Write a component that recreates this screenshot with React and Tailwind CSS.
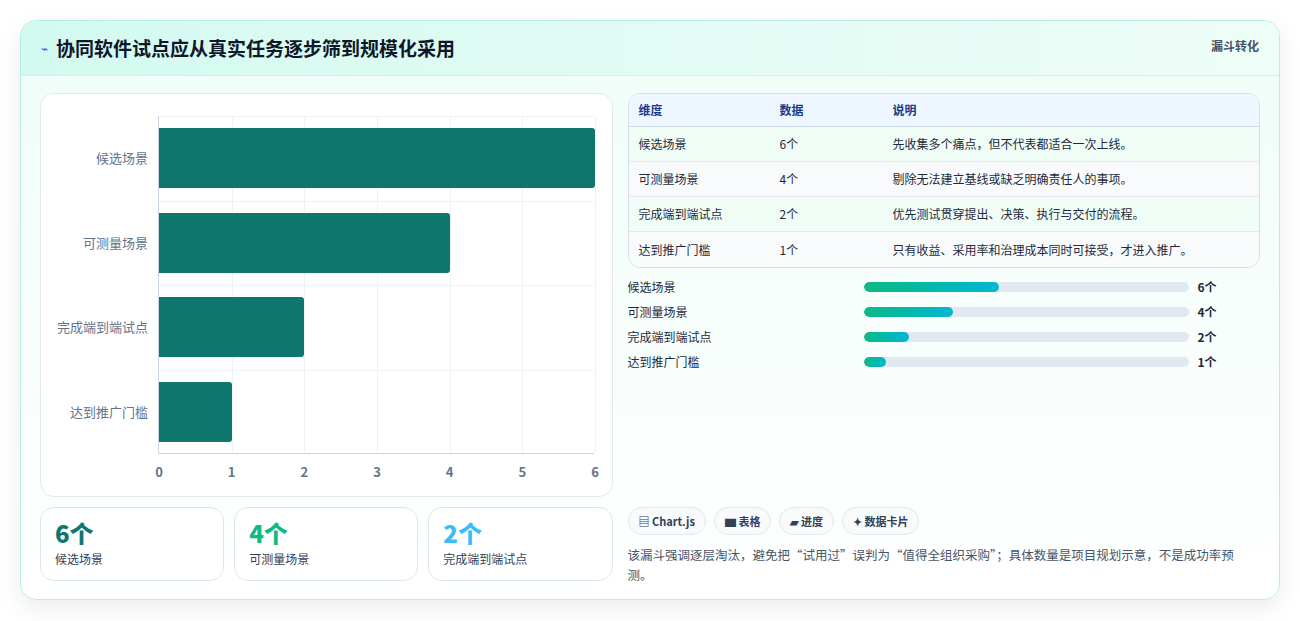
export default function App() {
  const font = { fontFamily: '"Noto Sans CJK SC", "Noto Sans", sans-serif' };
  const rows = [
    ["候选场景", "6个", "先收集多个痛点，但不代表都适合一次上线。", 135],
    ["可测量场景", "4个", "剔除无法建立基线或缺乏明确责任人的事项。", 89],
    ["完成端到端试点", "2个", "优先测试贯穿提出、决策、执行与交付的流程。", 45],
    ["达到推广门槛", "1个", "只有收益、采用率和治理成本同时可接受，才进入推广。", 22],
  ];
  const vals = [6, 4, 2, 1];
  const unit = 436 / 6;
  return (
    <div style={font} className="w-[1300px] h-[621px] bg-white pt-[20px] px-[20px]">
      <div className="w-[1260px] h-[580px] rounded-[16px] border border-[#b9ece3] shadow-[0_8px_24px_rgba(0,0,0,0.08)] bg-gradient-to-b from-[#effdf8] to-white overflow-hidden flex flex-col">
        <div className="h-[55px] flex items-center justify-between px-[20px] bg-gradient-to-r from-[#d3faf0] to-[#eefdf8] border-b border-[#d6efe9]">
          <div className="flex items-center gap-[8px]">
            <span className="text-[#2563eb] text-[12px]">⌁</span>
            <span className="text-[19px] font-bold text-[#0f172a]">协同软件试点应从真实任务逐步筛到规模化采用</span>
          </div>
          <span className="text-[12px] font-bold text-[#475569] self-start mt-[16px]">漏斗转化</span>
        </div>
        <div className="flex gap-[15px] px-[19px] pt-[17px]">
          <div className="w-[573px] flex flex-col gap-[10px]">
            <div className="h-[404px] bg-white border border-[#e2e8f0] rounded-[14px] relative">
              <div className="absolute left-[117px] top-[22px] w-[436px] h-[338px] border-l border-b border-[#cbd5e1]">
                {[1,2,3,4,5,6].map(i => (
                  <div key={i} className="absolute top-0 bottom-0 border-l border-[#eef1f5]" style={{ left: i * unit }} />
                ))}
                {[1,2,3].map(i => (
                  <div key={i} className="absolute left-0 right-0 border-t border-[#eef1f5]" style={{ top: i * 84.5 }} />
                ))}
                <div className="absolute left-0 right-0 top-0 border-t border-[#eef1f5]" />
                {vals.map((v, i) => (
                  <div key={i} className="absolute left-0 bg-[#0f766e] rounded-r-[3px]" style={{ top: 12 + i * 84.5, height: 60, width: v * unit }} />
                ))}
                {rows.map((r, i) => (
                  <div key={i} className="absolute right-[446px] text-[13px] text-[#64748b] whitespace-nowrap" style={{ top: 32 + i * 84.5 }}>{r[0]}</div>
                ))}
                {[0,1,2,3,4,5,6].map(i => (
                  <div key={i} className="absolute top-[346px] text-[13px] font-bold text-[#64748b] -translate-x-1/2" style={{ left: i * unit }}>{i}</div>
                ))}
              </div>
            </div>
            <div className="flex gap-[10px]">
              {[["6个","候选场景","text-[#0f766e]"],["4个","可测量场景","text-[#10b981]"],["2个","完成端到端试点","text-[#38bdf8]"]].map(([n,l,c]) => (
                <div key={l} className="flex-1 h-[74px] bg-white border border-[#dbe7ef] rounded-[14px] px-[14px] pt-[10px]">
                  <div className={`text-[24px] font-extrabold leading-[30px] ${c}`}>{n}</div>
                  <div className="text-[12px] text-[#334155] mt-[2px]">{l}</div>
                </div>
              ))}
            </div>
          </div>
          <div className="w-[633px] flex flex-col">
            <div className="border border-[#d6e0ea] rounded-[12px] overflow-hidden bg-white">
              <div className="flex h-[33px] items-center bg-[#eef6ff] border-b border-[#cfdcea] text-[12px] font-bold text-[#1e3a8a]">
                <div className="w-[151px] pl-[10px]">维度</div><div className="w-[113px]">数据</div><div>说明</div>
              </div>
              {rows.map((r, i) => (
                <div key={i} className={`flex h-[35px] items-center text-[12px] text-[#1e293b] ${i < 3 ? "border-b border-[#e5eaf0]" : ""} ${i % 2 ? "bg-[#f8fafc]" : "bg-[#f0fdf6]"}`}>
                  <div className="w-[151px] pl-[10px]">{r[0]}</div><div className="w-[113px]">{r[1]}</div><div>{r[2]}</div>
                </div>
              ))}
            </div>
            <div className="mt-[10px] flex flex-col gap-[7px]">
              {rows.map((r, i) => (
                <div key={i} className="flex items-center h-[18px] text-[12px] text-[#1e293b]">
                  <div className="w-[236px]">{r[0]}</div>
                  <div className="w-[325px] h-[10px] rounded-full bg-[#e2e8f0] overflow-hidden">
                    <div className="h-full rounded-full bg-gradient-to-r from-[#10b981] to-[#06b6d4]" style={{ width: r[3] }} />
                  </div>
                  <div className="ml-[9px] font-bold">{r[1]}</div>
                </div>
              ))}
            </div>
            <div className="mt-[136px] flex gap-[8px]">
              {["▤ Chart.js","▆ 表格","▰ 进度","✦ 数据卡片"].map(t => (
                <div key={t} className="h-[28px] px-[10px] flex items-center rounded-full border border-[#e2e8f0] bg-[#f8fafc] text-[11px] font-bold text-[#334155]">{t}</div>
              ))}
            </div>
            <p className="mt-[10px] text-[12.5px] leading-[20px] text-[#475569] w-[620px]">该漏斗强调逐层淘汰，避免把“试用过”误判为“值得全组织采购”；具体数量是项目规划示意，不是成功率预测。</p>
          </div>
        </div>
      </div>
    </div>
  );
}
